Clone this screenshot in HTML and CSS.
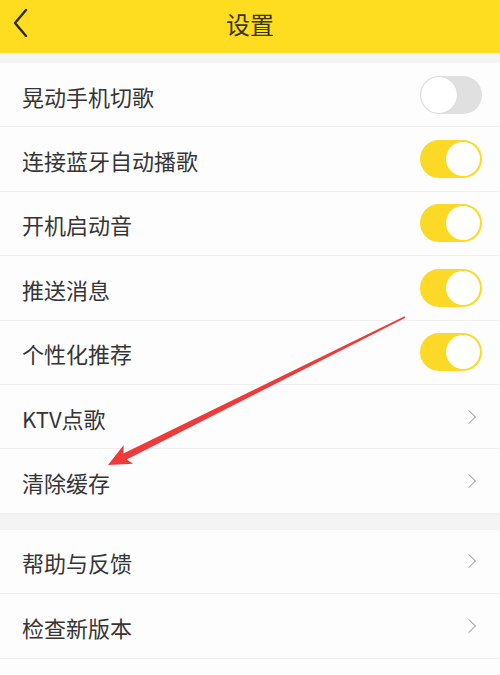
FILE: index.html
```html
<!DOCTYPE html>
<html lang="zh-CN">
<head>
    <meta charset="UTF-8">
    <title>设置</title>
    <link rel="stylesheet" href="styles.css">
</head>
<body>
<div class="page">
    <header class="topbar">
        <span class="back">
            <svg width="20" height="30" viewBox="0 0 20 30"><path d="M14 3 L3 16 L14 29" fill="none" stroke="#2e2a12" stroke-width="2.4" stroke-linecap="round" stroke-linejoin="round"/></svg>
        </span>
        <h1 class="title">设置</h1>
    </header>

    <ul class="group">
        <li class="item"><span class="label">晃动手机切歌</span><span class="switch"></span></li>
        <li class="item"><span class="label">连接蓝牙自动播歌</span><span class="switch on"></span></li>
        <li class="item"><span class="label">开机启动音</span><span class="switch on"></span></li>
        <li class="item"><span class="label">推送消息</span><span class="switch on"></span></li>
        <li class="item"><span class="label">个性化推荐</span><span class="switch on"></span></li>
        <li class="item"><span class="label">KTV点歌</span><span class="arrow-r"></span></li>
        <li class="item"><span class="label">清除缓存</span><span class="arrow-r"></span></li>
    </ul>

    <ul class="group last">
        <li class="item"><span class="label">帮助与反馈</span><span class="arrow-r"></span></li>
        <li class="item"><span class="label">检查新版本</span><span class="arrow-r"></span></li>
    </ul>

    <!-- 标注箭头 -->
    <svg class="mark" width="500" height="675" viewBox="0 0 500 675">
        <polygon points="108,465 123.7,444.9 123.4,453.4 404.6,316.3 405.4,317.7 126.6,459.6 133.1,463.7" fill="#f03a3a"/>
    </svg>
</div>
</body>
</html>
```

FILE: styles.css
```css
* {
    box-sizing: border-box;
}

body {
    margin: 0;
    background-color: #f4f4f4;
    font-family: "Noto Sans CJK SC", "Noto Sans", sans-serif;
    color: #333;
}

.page {
    position: relative;
    width: 500px;
    height: 675px;
    overflow: hidden;
    display: flex;
    flex-direction: column;
}

.topbar {
    flex: none;
    height: 53px;
    background-color: #fedc1f;
    display: flex;
    align-items: center;
    justify-content: center;
    position: relative;
}

.back {
    position: absolute;
    left: 12px;
    top: 7px;
    width: 20px;
    height: 30px;
}

.title {
    margin: -6px 0 0;
    font-size: 24px;
    font-weight: normal;
    color: #38320f;
}

.group {
    flex: none;
    list-style: none;
    margin: 10px 0 0;
    padding: 0;
    background-color: #fdfdfd;
}

.group + .group {
    margin-top: 16px;
}

.group.last {
    flex: 1;
}

.item {
    height: 64.4px;
    display: flex;
    align-items: center;
    justify-content: space-between;
    padding: 0 18px 0 22px;
    border-bottom: 1px solid #efefef;
}

.label {
    font-size: 22px;
    color: #353535;
    padding-top: 2px;
}

.switch {
    width: 62px;
    height: 38px;
    border-radius: 19px;
    background-color: #e0e0e0;
    position: relative;
}

.switch::after {
    content: "";
    position: absolute;
    left: 1px;
    top: 1px;
    width: 36px;
    height: 36px;
    border-radius: 50%;
    background-color: #fff;
    box-shadow: 0 0 1px rgba(0, 0, 0, 0.15);
}

.switch.on {
    background-color: #fcd927;
}

.switch.on::after {
    left: 26px;
    top: 2px;
    width: 34px;
    height: 34px;
    box-shadow: none;
}

.arrow-r {
    width: 10px;
    height: 10px;
    margin-right: 8px;
    border-top: 1.6px solid #a9a9a9;
    border-right: 1.6px solid #a9a9a9;
    transform: rotate(45deg);
}

.mark {
    position: absolute;
    left: 0;
    top: 0;
    pointer-events: none;
}
```
